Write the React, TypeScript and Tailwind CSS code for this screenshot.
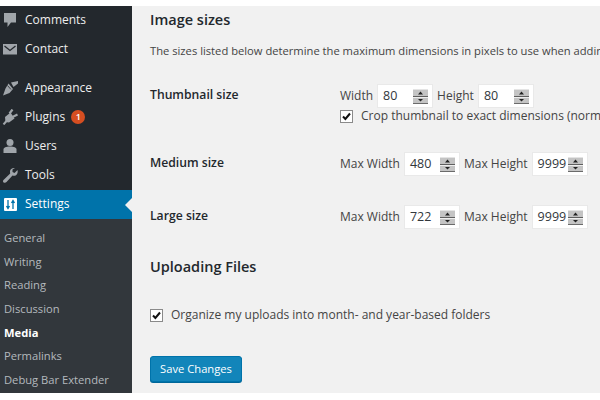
import type { ReactNode } from 'react';

const font = { fontFamily: '"Open Sans", sans-serif' };

function Spinner() {
  return (
    <svg width="15" height="15" viewBox="0 0 15 15" className="shrink-0">
      <rect width="15" height="15" fill="#c4c4c4" />
      <rect x="0" y="0" width="15" height="1" fill="#e4e4e4" />
      <rect x="0" y="7" width="15" height="1" fill="#5f5f5f" />
      <rect x="0" y="8" width="15" height="1" fill="#eeeeee" />
      <rect x="0" y="14" width="15" height="1" fill="#6b6b6b" />
      <path d="M7.5 2.5 L10 5.5 H5 Z" fill="#222" />
      <path d="M5 10 H10 L7.5 12.5 Z" fill="#222" />
    </svg>
  );
}

function NumberBox({ value }: { value: string }) {
  return (
    <div className="flex h-[24px] w-[56px] items-center justify-between border border-[#e9e9e9] bg-white pl-[5px] pr-[4px] text-[12.5px] text-[#32373c]">
      <span>{value}</span>
      <Spinner />
    </div>
  );
}

function Checkbox() {
  return (
    <div className="flex h-[13px] w-[13px] shrink-0 items-center justify-center border border-[#8a8a8a] bg-white">
      <svg width="9" height="9" viewBox="0 0 9 9">
        <path d="M1 4.5 L3.4 7 L8 1.5" fill="none" stroke="#111" strokeWidth="2" />
      </svg>
    </div>
  );
}

function MenuRow({
  icon,
  label,
  badge,
  size = 'h-[29.3px]',
}: {
  icon: ReactNode;
  label: string;
  badge?: boolean;
  size?: string;
}) {
  return (
    <div className={`flex items-center text-[12px] text-[#eeeeee] ${size}`}>
      <div className="flex w-[25px] justify-center pl-[1px] pr-[6px]">{icon}</div>
      <span>{label}</span>
      {badge && (
        <span className="ml-[6px] flex h-[14px] w-[14px] items-center justify-center rounded-full bg-[#d54e21] text-[9px] font-semibold text-white">
          1
        </span>
      )}
    </div>
  );
}

const iconColor = '#a0a5aa';

const CommentIcon = (
  <svg width="16" height="16" viewBox="0 0 16 16">
    <path d="M2 1 H14 V10.5 H9 L5.5 15 V10.5 H2 Z" fill={iconColor} />
  </svg>
);
const MailIcon = (
  <svg width="16" height="16" viewBox="0 0 16 16">
    <rect x="1" y="3" width="14" height="10.5" fill={iconColor} />
    <path d="M2.5 5 L8 9.5 L13.5 5" fill="none" stroke="#23282d" strokeWidth="1.3" />
  </svg>
);
const BrushIcon = (
  <svg width="16" height="16" viewBox="0 0 16 16">
    <path d="M9 2.5 L16 1 L16 3.5 L11.5 7 Z" fill={iconColor} />
    <path d="M6.5 3.5 L11 9 L7.5 13 L1 15.5 L3.5 8.5 Z" fill={iconColor} />
    <path d="M5.5 5.5 L9 9.5" stroke="#23282d" strokeWidth="0.8" />
  </svg>
);
const PlugIcon = (
  <svg width="16" height="16" viewBox="0 0 16 16">
    <path d="M3 8 L8.5 3.5 L12.5 9.5 L7 13.5 L3.5 13 Z" fill={iconColor} />
    <path d="M7.5 4.5 L10.5 0.5 M10.5 8 L15.5 5.5" stroke={iconColor} strokeWidth="2.2" />
    <path d="M4.5 12 L1.5 15.5" stroke={iconColor} strokeWidth="2" />
  </svg>
);
const UserIcon = (
  <svg width="16" height="16" viewBox="0 0 16 16">
    <circle cx="8" cy="4.5" r="3.5" fill={iconColor} />
    <path d="M1.5 15 V11.5 C1.5 9.5 4 8.5 8 8.5 C12 8.5 14.5 9.5 14.5 11.5 V15 Z" fill={iconColor} />
  </svg>
);
const WrenchIcon = (
  <svg width="16" height="16" viewBox="0 0 16 16">
    <path
      d="M15.5 3 L12.5 6 L10.5 5 L10.5 2.5 L13 1 C10.5 0.5 8 2 8 4.5 C8 5.5 8.2 6 8.2 6.5 L1.5 13 C0.5 14 1 15.5 2.5 15.8 C3.2 16 4 15.5 4.5 15 L10.5 8.5 C11.5 9 13 9 14 8.2 C15.5 7 16 5 15.5 3 Z"
      fill={iconColor}
    />
  </svg>
);
const SettingsIcon = (
  <svg width="13" height="13" viewBox="0 0 13 13">
    <rect width="13" height="13" rx="1" fill="#ffffff" />
    <path d="M4 2 V11 M2.5 8 L4 10.5 L5.5 8" fill="none" stroke="#0073aa" strokeWidth="1.3" />
    <path d="M9 11 V2 M7.5 5 L9 2.5 L10.5 5" fill="none" stroke="#0073aa" strokeWidth="1.3" />
  </svg>
);

const subItems = ['General', 'Writing', 'Reading', 'Discussion', 'Media', 'Permalinks', 'Debug Bar Extender'];

function Sidebar() {
  return (
    <aside className="flex w-[132px] shrink-0 flex-col bg-[#23282d]">
      <MenuRow icon={CommentIcon} label="Comments" size="h-[28px]" />
      <MenuRow icon={MailIcon} label="Contact" />
      <div className="h-[10px]" />
      <MenuRow icon={BrushIcon} label="Appearance" />
      <MenuRow icon={PlugIcon} label="Plugins" badge />
      <MenuRow icon={UserIcon} label="Users" size="h-[29px]" />
      <MenuRow icon={WrenchIcon} label="Tools" size="h-[29px]" />
      <div className="relative flex h-[29px] items-center bg-[#0073aa] pl-[4px] text-[12px] text-white">
        <div className="w-[21px]">{SettingsIcon}</div>
        <span>Settings</span>
        <div className="absolute right-0 top-[8px] h-0 w-0 border-y-[7px] border-r-[7px] border-y-transparent border-r-[#f1f1f1]" />
      </div>
      <div className="flex flex-1 flex-col bg-[#32373c] pt-[7.5px] pl-[4px] text-[11.2px] text-[#b4b9be]">
        {subItems.map((item) => (
          <div
            key={item}
            className={`flex h-[23.7px] items-center ${item === 'Media' ? 'font-bold text-white' : ''}`}
          >
            {item}
          </div>
        ))}
      </div>
    </aside>
  );
}

function SizeRow({
  title,
  children,
  height,
}: {
  title: string;
  children: ReactNode;
  height: string;
}) {
  return (
    <div className={`flex items-start ${height}`}>
      <div className="w-[190px] shrink-0 pt-[5px] text-[12.2px] font-semibold leading-[18px] text-[#23282d]">
        {title}
      </div>
      <div className="flex flex-col whitespace-nowrap pt-[3px]">{children}</div>
    </div>
  );
}

function SizeField({ label, value }: { label: string; value: string }) {
  return (
    <div className="flex items-center gap-[4px]">
      <span>{label}</span>
      <NumberBox value={value} />
    </div>
  );
}

export default function App() {
  return (
    <div className="h-[400px] w-[600px] overflow-hidden bg-white pt-[6px] pb-[7px]" style={font}>
      <div className="flex h-full bg-[#f1f1f1]">
        <Sidebar />
        <main className="min-w-0 flex-1 overflow-hidden whitespace-nowrap pl-[18px] text-[12px] text-[#444444]">
          <h2 className="pt-[3px] text-[14.5px] font-semibold leading-[22px] text-[#23282d]">Image sizes</h2>
          <p className="mt-[11px] text-[11.2px] leading-[18px]">
            The sizes listed below determine the maximum dimensions in pixels to use when adding an image to the Media Library.
          </p>
          <div className="mt-[21px]">
            <SizeRow title="Thumbnail size" height="h-[68px]">
              <div className="flex gap-[4px]">
                <SizeField label="Width" value="80" />
                <SizeField label="Height" value="80" />
              </div>
              <label className="mt-[-1px] flex items-center gap-[8px]">
                <Checkbox />
                <span>Crop thumbnail to exact dimensions (normally thumbnails are proportional)</span>
              </label>
            </SizeRow>
            <SizeRow title="Medium size" height="h-[53px]">
              <div className="flex gap-[4px]">
                <SizeField label="Max Width" value="480" />
                <SizeField label="Max Height" value="9999" />
              </div>
            </SizeRow>
            <SizeRow title="Large size" height="h-[47px]">
              <div className="flex gap-[4px]">
                <SizeField label="Max Width" value="722" />
                <SizeField label="Max Height" value="9999" />
              </div>
            </SizeRow>
          </div>
          <h2 className="mt-[7px] text-[14.5px] font-semibold leading-[22px] text-[#23282d]">Uploading Files</h2>
          <label className="mt-[28px] flex items-center gap-[8px] leading-[18px]">
            <Checkbox />
            <span>Organize my uploads into month- and year-based folders</span>
          </label>
          <button className="mt-[32px] block h-[26px] w-[92px] rounded-[3px] border border-[#0073aa] bg-[#1285ba] text-[11.2px] text-white shadow-[0_1px_0_#006799]">
            Save Changes
          </button>
        </main>
      </div>
    </div>
  );
}
